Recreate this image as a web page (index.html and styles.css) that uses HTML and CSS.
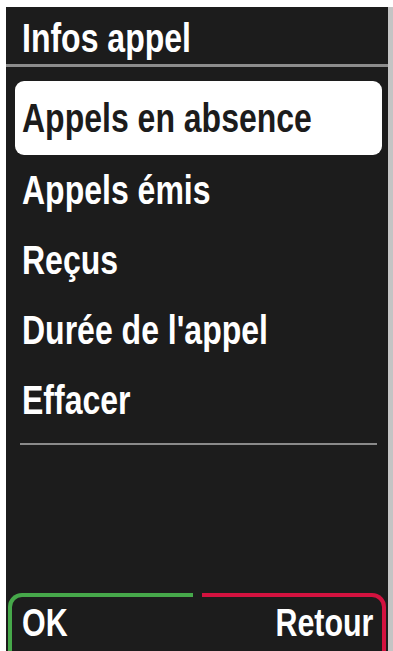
FILE: index.html
```html
<!DOCTYPE html>
<html lang="fr">
<head>
<meta charset="utf-8">
<link rel="stylesheet" href="styles.css">
</head>
<body>
<div class="frame">
  <div class="screen">
    <div class="header"><span class="title cond">Infos appel</span></div>
    <div class="rule-top"></div>
    <ul class="menu">
      <li class="item selected"><span class="cond">Appels en absence</span></li>
      <li class="item"><span class="cond">Appels émis</span></li>
      <li class="item"><span class="cond">Reçus</span></li>
      <li class="item"><span class="cond">Durée de l'appel</span></li>
      <li class="item"><span class="cond">Effacer</span></li>
    </ul>
    <div class="rule-bottom"></div>
    <div class="spacer"></div>
    <div class="softkeys">
      <div class="key key-ok"><span class="cond">OK</span></div>
      <div class="key key-back"><span class="cond cond-right">Retour</span></div>
    </div>
  </div>
  <div class="edge"></div>
</div>
</body>
</html>
```

FILE: styles.css
```css
html, body {
  margin: 0;
  padding: 0;
  background: #ffffff;
}
body {
  width: 393px;
  height: 651px;
  overflow: hidden;
  font-family: "Liberation Sans", Arial, sans-serif;
  font-weight: bold;
  color: #ffffff;
}
.cond {
  display: inline-block;
  transform: scaleX(0.8);
  transform-origin: left center;
  white-space: nowrap;
}
.cond-right {
  transform-origin: right center;
}
.frame {
  display: flex;
  height: 651px;
  padding-left: 6px;
  padding-top: 7px;
  box-sizing: border-box;
}
.screen {
  width: 382px;
  height: 644px;
  background: #1c1c1c;
  display: flex;
  flex-direction: column;
}
.edge {
  width: 5px;
  height: 644px;
  background: #c4c4c4;
}
.header {
  height: 57px;
  display: flex;
  align-items: center;
  padding-left: 16px;
}
.title {
  font-size: 40px;
  line-height: 1;
  position: relative;
  top: 2px;
}
.rule-top {
  height: 3px;
  background: #8c8c8c;
}
.menu {
  list-style: none;
  margin: 14px 6px 0 9px;
  padding: 0;
}
.item {
  height: 70px;
  display: flex;
  align-items: center;
  padding-left: 7px;
  font-size: 40px;
  line-height: 1;
}
.item.selected {
  height: 74px;
  background: #ffffff;
  color: #1c1c1c;
  border-radius: 9px;
}
.rule-bottom {
  height: 2px;
  margin: 8px 11px 0 14px;
  background: #8a8a8a;
}
.spacer {
  flex: 1;
}
.softkeys {
  display: flex;
  gap: 9px;
  height: 58px;
  padding: 0 2px;
}
.key {
  flex: 1;
  font-size: 38px;
  line-height: 1;
  padding-top: 7px;
  box-sizing: border-box;
}
.key-ok {
  border-top: 4px solid #46a84a;
  border-left: 4px solid #46a84a;
  border-top-left-radius: 14px;
  padding-left: 10px;
}
.key-back {
  border-top: 4px solid #d3123f;
  border-right: 4px solid #d3123f;
  border-top-right-radius: 14px;
  text-align: right;
  padding-right: 9px;
}
```
